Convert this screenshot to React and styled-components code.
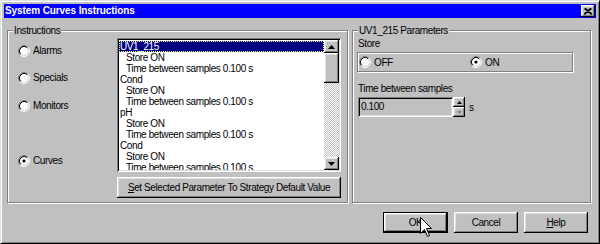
import React from "react";
import styled, { createGlobalStyle } from "styled-components";

const GlobalStyle = createGlobalStyle`
  html, body { margin: 0; padding: 0; background: #c0c0c0; }
`;

const raised = `
  box-shadow: inset -1px -1px #000, inset 1px 1px #fff, inset -2px -2px #808080, inset 2px 2px #dfdfdf;
`;
const sunken = `
  box-shadow: inset 1px 1px #808080, inset -1px -1px #fff, inset 2px 2px #000, inset -2px -2px #dfdfdf;
`;
const etched = `
  border: 1px solid #808080;
  box-shadow: inset 1px 1px #fff, 1px 1px #fff;
`;

const Window = styled.div`
  position: relative;
  box-sizing: border-box;
  width: 600px;
  height: 244px;
  display: flex;
  flex-direction: column;
  background: #c0c0c0;
  border: 1px solid;
  border-color: #dfdfdf #000 #000 #dfdfdf;
  box-shadow: inset 1px 1px #fff, inset -1px -1px #808080;
  padding: 3px;
  font-family: "Liberation Sans", Arial, sans-serif;
  font-size: 10px;
  letter-spacing: -0.4px;
  color: #000;
`;

const TitleBar = styled.div`
  height: 14px;
  flex: none;
  display: flex;
  align-items: center;
  justify-content: space-between;
  padding: 0 1px;
  background: #0000fe;
`;

const Title = styled.div`
  color: #fff;
  font-weight: bold;
  font-size: 10px;
  letter-spacing: -0.1px;
  line-height: 14px;
`;

const CloseButton = styled.div`
  box-sizing: border-box;
  width: 14px;
  height: 12px;
  background: #c0c0c0;
  display: flex;
  align-items: center;
  justify-content: center;
  ${raised}
`;

const Main = styled.div`
  flex: 1;
  display: flex;
  flex-direction: column;
  padding: 12px 5px 0 3px;
`;

const TopRow = styled.div`
  display: flex;
  gap: 4px;
  height: 173px;
`;

const GroupBox = styled.div`
  position: relative;
  box-sizing: border-box;
  ${etched}
  width: ${(p) => (p.$width ? `${p.$width}px` : "auto")};
  flex: ${(p) => (p.$width ? "none" : "1")};
`;

const GroupLabel = styled.div`
  position: absolute;
  top: -7px;
  left: 5px;
  padding: 0 1px;
  background: #c0c0c0;
  line-height: 13px;
`;

const LeftInner = styled.div`
  display: flex;
  padding: 0 6px 0 10px;
`;

const RadioColumn = styled.div`
  width: 99px;
  display: flex;
  flex-direction: column;
`;

const RadioItem = styled.div`
  display: flex;
  align-items: center;
  gap: 3px;
  height: 13px;
  margin-top: ${(p) => p.$gap || 0}px;
  width: ${(p) => (p.$width ? `${p.$width}px` : "auto")};
  flex: none;
`;

const ListColumn = styled.div`
  width: 224px;
  padding-top: 7px;
  display: flex;
  flex-direction: column;
`;

const ListBox = styled.div`
  box-sizing: border-box;
  height: 134px;
  padding: 2px;
  background: #fff;
  display: flex;
  ${sunken}
`;

const ListItems = styled.div`
  flex: 1;
  overflow: hidden;
  padding-top: 1px;
`;

const ListItem = styled.div`
  height: 11px;
  line-height: 11px;
  white-space: nowrap;
  padding-left: ${(p) => (p.$indent ? 7 : 1)}px;
  background: ${(p) => (p.$selected ? "#000080" : "transparent")};
  color: ${(p) => (p.$selected ? "#fff" : "#000")};
  outline: ${(p) => (p.$selected ? "1px dotted #ffff80" : "none")};
  outline-offset: -1px;
`;

const ScrollBar = styled.div`
  width: 15px;
  display: flex;
  flex-direction: column;
`;

const ScrollButton = styled.div`
  box-sizing: border-box;
  height: 13px;
  background: #c0c0c0;
  display: flex;
  align-items: center;
  justify-content: center;
  ${raised}
`;

const Thumb = styled.div`
  box-sizing: border-box;
  height: 30px;
  background: #c0c0c0;
  ${raised}
`;

const Track = styled.div`
  flex: 1;
  background: repeating-conic-gradient(#fff 0 25%, #c0c0c0 0 50%) 0 0 / 2px 2px;
`;

const PushButton = styled.button`
  box-sizing: border-box;
  width: ${(p) => p.$width}px;
  height: 21px;
  margin: 0;
  padding: 0;
  background: #c0c0c0;
  font: inherit;
  letter-spacing: inherit;
  color: #000;
  border: ${(p) => (p.$default ? "1px solid #000" : "none")};
  ${raised}
  margin-top: ${(p) => p.$gap || 0}px;
  cursor: default;
`;

const RightInner = styled.div`
  display: flex;
  flex-direction: column;
  padding: 6px 0 0 5px;
`;

const FieldLabel = styled.div`
  line-height: 13px;
  margin-top: ${(p) => p.$gap || 0}px;
`;

const StoreBox = styled.div`
  box-sizing: border-box;
  width: 216px;
  height: 20px;
  margin: 2px 0 0 -1px;
  ${etched}
  display: flex;
  align-items: center;
  padding-left: 1px;
`;

const InputRow = styled.div`
  display: flex;
  align-items: center;
  margin-top: 2px;
`;

const TextInput = styled.div`
  box-sizing: border-box;
  width: 95px;
  height: 20px;
  padding: 0 3px;
  line-height: 20px;
  background: #c0c0c0;
  ${sunken}
`;

const Spinner = styled.div`
  width: 12px;
  height: 20px;
  display: flex;
  flex-direction: column;
`;

const SpinButton = styled.div`
  box-sizing: border-box;
  height: 10px;
  background: #c0c0c0;
  display: flex;
  align-items: center;
  justify-content: center;
  ${raised}
`;

const Unit = styled.span`
  margin-left: 4px;
`;

const ButtonRow = styled.div`
  display: flex;
  justify-content: flex-end;
  gap: 6px;
  margin-top: 9px;
  padding-right: 3px;
`;

const Cursor = styled.svg`
  position: absolute;
  left: 419px;
  top: 216px;
  pointer-events: none;
`;

const Radio = ({ checked }) => (
  <svg width="12" height="12" viewBox="0 0 12 12">
    <circle cx="6" cy="6" r="4" fill="#fff" />
    <path d="M2.11 9.89 A5.5 5.5 0 0 1 9.89 2.11" fill="none" stroke="#808080" />
    <path d="M9.89 2.11 A5.5 5.5 0 0 1 2.11 9.89" fill="none" stroke="#fff" />
    <path d="M2.82 9.18 A4.5 4.5 0 0 1 9.18 2.82" fill="none" stroke="#000" />
    <path d="M9.18 2.82 A4.5 4.5 0 0 1 2.82 9.18" fill="none" stroke="#dfdfdf" />
    {checked && <circle cx="6" cy="6" r="1.6" fill="#000" />}
  </svg>
);

const Arrow = ({ up, color = "#000", w = 7, h = 4 }) => (
  <svg width={w} height={h} viewBox={`0 0 ${w} ${h}`}>
    <polygon
      points={up ? `0,${h} ${w},${h} ${w / 2},0` : `0,0 ${w},0 ${w / 2},${h}`}
      fill={color}
    />
  </svg>
);

const items = [
  { t: "UV1_215", sel: true },
  { t: "Store ON", i: true },
  { t: "Time between samples 0.100 s", i: true },
  { t: "Cond" },
  { t: "Store ON", i: true },
  { t: "Time between samples 0.100 s", i: true },
  { t: "pH" },
  { t: "Store ON", i: true },
  { t: "Time between samples 0.100 s", i: true },
  { t: "Cond" },
  { t: "Store ON", i: true },
  { t: "Time between samples 0.100 s", i: true },
];

export default function App() {
  return (
    <>
      <GlobalStyle />
      <Window>
        <TitleBar>
          <Title>System Curves Instructions</Title>
          <CloseButton>
            <svg width="8" height="7" viewBox="0 0 8 7">
              <path d="M0.5 0.5 L7.5 6.5 M1.5 0.5 L8 6 M7.5 0.5 L0.5 6.5 M6.5 0.5 L0 6" stroke="#000" strokeWidth="1.2" />
            </svg>
          </CloseButton>
        </TitleBar>
        <Main>
          <TopRow>
            <GroupBox $width={341}>
              <GroupLabel>Instructions</GroupLabel>
              <LeftInner>
                <RadioColumn>
                  <RadioItem $gap={13}><Radio />Alarms</RadioItem>
                  <RadioItem $gap={14}><Radio />Specials</RadioItem>
                  <RadioItem $gap={15}><Radio />Monitors</RadioItem>
                  <RadioItem $gap={42}><Radio checked />Curves</RadioItem>
                </RadioColumn>
                <ListColumn>
                  <ListBox>
                    <ListItems>
                      {items.map((it, k) => (
                        <ListItem key={k} $indent={it.i} $selected={it.sel}>{it.t}</ListItem>
                      ))}
                    </ListItems>
                    <ScrollBar>
                      <ScrollButton><Arrow up /></ScrollButton>
                      <Thumb />
                      <Track />
                      <ScrollButton><Arrow /></ScrollButton>
                    </ScrollBar>
                  </ListBox>
                  <PushButton $width={224} $gap={5}>
                    <u>S</u>et Selected Parameter To Strategy Default Value
                  </PushButton>
                </ListColumn>
              </LeftInner>
            </GroupBox>
            <GroupBox>
              <GroupLabel>UV1_215 Parameters</GroupLabel>
              <RightInner>
                <FieldLabel>Store</FieldLabel>
                <StoreBox>
                  <RadioItem $width={111}><Radio />OFF</RadioItem>
                  <RadioItem><Radio checked />ON</RadioItem>
                </StoreBox>
                <FieldLabel $gap={10}>Time between samples</FieldLabel>
                <InputRow>
                  <TextInput>0.100</TextInput>
                  <Spinner>
                    <SpinButton><Arrow up w={5} h={3} /></SpinButton>
                    <SpinButton><Arrow w={5} h={3} color="#808080" /></SpinButton>
                  </Spinner>
                  <Unit>s</Unit>
                </InputRow>
              </RightInner>
            </GroupBox>
          </TopRow>
          <ButtonRow>
            <PushButton $width={65} $default>OK</PushButton>
            <PushButton $width={64}>Cancel</PushButton>
            <PushButton $width={64}><u>H</u>elp</PushButton>
          </ButtonRow>
        </Main>
        <Cursor width="13" height="21" viewBox="0 0 13 21">
          <path d="M0.5 0.5 L0.5 16.5 L4.5 12.5 L7.5 19.5 L9.5 18.5 L6.5 11.5 L11.5 11.5 Z" fill="#fff" stroke="#000" />
        </Cursor>
      </Window>
    </>
  );
}
